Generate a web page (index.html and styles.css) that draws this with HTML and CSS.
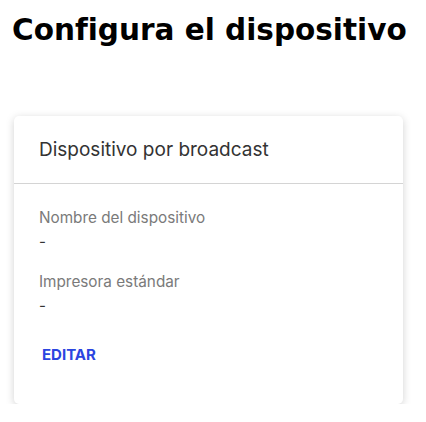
FILE: index.html
```html
<!DOCTYPE html>
<html lang="es">
<head>
  <meta charset="UTF-8" />
  <meta name="viewport" content="width=device-width, initial-scale=1.0"/>
  <title>Configura el dispositivo</title>
  <link rel="stylesheet" href="styles.css">
</head>
<body>
  <div class="page">
    <h1 class="page-title">Configura el dispositivo</h1>

    <div class="card">
      <div class="card-header">
        <h2>Dispositivo por broadcast</h2>
      </div>
      <div class="card-body">
        <div class="field">
          <div class="field-label">Nombre del dispositivo</div>
          <div class="field-value">-</div>
        </div>
        <div class="field">
          <div class="field-label">Impresora estándar</div>
          <div class="field-value">-</div>
        </div>
        <button class="edit-button">EDITAR</button>
      </div>
    </div>
  </div>
</body>
</html>
```

FILE: styles.css
```css
body { font-family: Inter, "Noto Sans", sans-serif; margin: 0; padding: 0; background-color: #fff; color: #222; }
.page { padding: 10px 23px 0 14px; }
.page-title { font-family: "DejaVu Sans", sans-serif; font-size: 29.5px; font-weight: 700; line-height: 40px; margin: 0 0 0 -2px; color: #000; white-space: nowrap; }
.card { margin-top: 66px; background-color: #fff; border-radius: 5px; box-shadow: 0 2px 8px rgba(0, 0, 0, 0.18); }
.card-header { height: 67px; display: flex; align-items: center; padding: 0 25px; border-bottom: 1px solid #d4d4d4; }
.card-header h2 { font-size: 19px; font-weight: 400; margin: 0; color: #333; }
.card-body { padding: 24px 25px 36px; }
.field { margin-bottom: 19px; }
.field-label { font-size: 15.3px; line-height: 20px; color: #7a7a7a; }
.field-value { font-size: 15px; line-height: 22px; margin-top: 3px; color: #333; }
.edit-button { background: none; border: none; padding: 4px 3px; margin-top: 5px; font-family: inherit; font-size: 15px; font-weight: 700; color: #2b45e0; cursor: pointer; }
```
